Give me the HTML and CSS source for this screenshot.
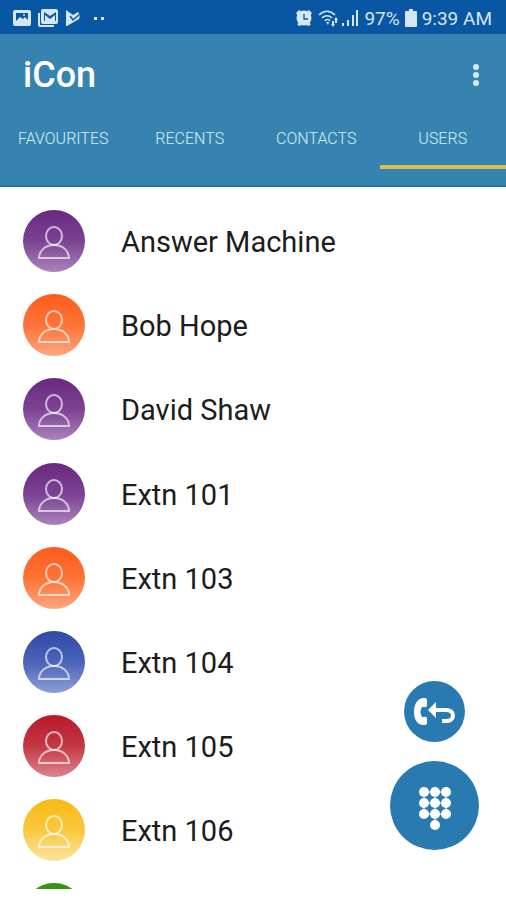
FILE: index.html
```html
<!DOCTYPE html>
<html lang="en">
<head>
  <meta charset="UTF-8">
  <meta name="viewport" content="width=device-width, initial-scale=1">
  <title>iCon - Users</title>
  <link rel="stylesheet" href="styles.css">
</head>
<body>
  <svg class="sprite" aria-hidden="true">
    <symbol id="person" viewBox="0 0 62 62">
      <ellipse cx="31" cy="26" rx="8" ry="9"/>
      <path d="M16 48c0-7 6-13 15-13s15 6 15 13z"/>
    </symbol>
  </svg>

  <div class="status-bar">
    <div class="status-left">
      <svg width="18" height="18" viewBox="0 0 18 18">
        <path fill-rule="evenodd" d="M2 1h14a2 2 0 0 1 2 2v12a2 2 0 0 1-2 2H2a2 2 0 0 1-2-2V3a2 2 0 0 1 2-2zM3 4v8l4-4 3 2 2-2 3 3V4z"/>
        <circle cx="11" cy="6" r="1"/>
      </svg>
      <svg width="20" height="18" viewBox="0 0 20 18">
        <path d="M0 4h2v12h14v2H2a2 2 0 0 1-2-2z"/>
        <path fill-rule="evenodd" d="M5 0h13a2 2 0 0 1 2 2v11a2 2 0 0 1-2 2H5a2 2 0 0 1-2-2V2a2 2 0 0 1 2-2zM6 3v9h1V6l5 4 5-4v6h1V3l-6 4z"/>
      </svg>
      <svg width="16" height="18" viewBox="0 0 16 18">
        <path d="M1 1l7 5 5-3 2 3-1 4L2 17H1z"/>
        <path d="M5 7l3 4 7-6" fill="none" stroke="#0956a2" stroke-width="1.5"/>
      </svg>
      <svg class="dots" width="12" height="18" viewBox="0 0 12 18">
        <path d="M0 8h3v3H0zM7 8h3v3H7z"/>
      </svg>
    </div>
    <div class="status-right">
      <svg width="18" height="18" viewBox="0 0 18 18">
        <circle cx="9" cy="9" r="7.5"/>
        <path d="M1 4l3-3 3 2-4 4zM17 4l-3-3-3 2 4 4zM2 15l3-2 2 3-3 1zM16 15l-3-2-2 3 3 1z"/>
        <path d="M9 5v5h4" fill="none" stroke="#0956a2" stroke-width="1.3"/>
      </svg>
      <svg class="wifi" width="22" height="18" viewBox="0 0 22 18">
        <g fill="none" stroke="#d5e6f7" stroke-width="1.6">
          <path d="M1 6c5-5 11-5 16 0M4 9c3-3 7-3 10 0M7 12c1-2 4-2 5 0"/>
        </g>
        <path d="M8 13h3l-1 3zM14 12h2v3h1l-2 3-2-3h1zM18 8l2 3h-1v3h-2v-3h-1z"/>
      </svg>
      <svg class="signal" width="18" height="18" viewBox="0 0 18 18">
        <path d="M1 14h2v3H1zM6 11h2v6H6zM11 6h2v11h-2zM15 1h2v16h-2z"/>
      </svg>
      <span>97%</span>
      <svg width="12" height="18" viewBox="0 0 12 18">
        <path d="M4 0h4v2h3a1 1 0 0 1 1 1v14a1 1 0 0 1-1 1H1a1 1 0 0 1-1-1V3a1 1 0 0 1 1-1h3z"/>
      </svg>
      <span>9:39 AM</span>
    </div>
  </div>

  <header class="app-bar">
    <div class="title-row">
      <h1>iCon</h1>
      <button class="menu-btn" aria-label="More options">
        <svg width="8" height="24" viewBox="0 0 8 24">
          <circle cx="4" cy="4" r="3"/><circle cx="4" cy="12" r="3"/><circle cx="4" cy="20" r="3"/>
        </svg>
      </button>
    </div>
    <nav class="tabs">
      <a href="#favourites">FAVOURITES</a>
      <a href="#recents">RECENTS</a>
      <a href="#contacts">CONTACTS</a>
      <a href="#users" class="active">USERS</a>
    </nav>
  </header>

  <ul class="user-list">
    <li><svg class="avatar purple"><use href="#person"/></svg><span>Answer Machine</span></li>
    <li><svg class="avatar orange"><use href="#person"/></svg><span>Bob Hope</span></li>
    <li><svg class="avatar purple"><use href="#person"/></svg><span>David Shaw</span></li>
    <li><svg class="avatar purple"><use href="#person"/></svg><span>Extn 101</span></li>
    <li><svg class="avatar orange"><use href="#person"/></svg><span>Extn 103</span></li>
    <li><svg class="avatar blue"><use href="#person"/></svg><span>Extn 104</span></li>
    <li><svg class="avatar red"><use href="#person"/></svg><span>Extn 105</span></li>
    <li><svg class="avatar yellow"><use href="#person"/></svg><span>Extn 106</span></li>
    <li><svg class="avatar green"><use href="#person"/></svg></li>
  </ul>

  <div class="fabs">
    <button class="fab" aria-label="Call back">
      <svg width="60" height="60" viewBox="0 0 60 60">
        <path d="M20 16c-7-1-11 6-11 14s4 14 11 13q2 0 2-2v-4q0-3-3-2l-2 0c-2-3-2-7 0-10l2 0q3 1 3-2v-5q0-2-2-2z"/>
        <path d="M23 28l8-8v16z"/>
        <path d="M29 28h12c4 0 7 2 7 5.500s-3 5.500-7 5.500h-4" fill="none" stroke="#fff" stroke-width="4"/>
      </svg>
    </button>
    <button class="fab fab-large" aria-label="Dial pad">
      <svg width="88" height="88" viewBox="0 0 88 88">
        <g stroke="#fff" stroke-width="1">
          <path d="M33 30h22M33 41h22M33 52h22M33 30v22M44 30v33M55 30v22"/>
        </g>
        <circle cx="33" cy="30" r="5"/><circle cx="44" cy="30" r="5"/><circle cx="55" cy="30" r="5"/>
        <circle cx="33" cy="41" r="5"/><circle cx="44" cy="41" r="5"/><circle cx="55" cy="41" r="5"/>
        <circle cx="33" cy="52" r="5"/><circle cx="44" cy="52" r="5"/><circle cx="55" cy="52" r="5"/>
        <circle cx="44" cy="63" r="5"/>
      </svg>
    </button>
  </div>
</body>
</html>
```
FILE: styles.css
```css
* { margin: 0; padding: 0; box-sizing: border-box; }
body {
  font-family: Roboto, sans-serif;
  background: #fff;
  color: #1c1c1c;
  height: 100vh;
  display: flex;
  flex-direction: column;
}
button { border: none; background: none; cursor: pointer; }
svg { display: block; }
.sprite { position: absolute; width: 0; height: 0; }

/* Status bar */
.status-bar {
  display: flex;
  justify-content: space-between;
  align-items: center;
  height: 34px;
  padding: 2px 14px 0 13px;
  background: #0956a2;
  color: #d5e6f7;
  font-size: 19px;
}
.status-bar svg { fill: #d5e6f7; }
.status-left { display: flex; gap: 7px; }
.status-left .dots { margin-left: 6px; }
.status-right { display: flex; align-items: center; gap: 5px; }
.status-right .wifi { margin-right: -4px; }

/* App bar and tabs */
.app-bar { background: #3783b0; border-bottom: 2px solid #2272a5; }
.title-row {
  display: flex;
  justify-content: space-between;
  align-items: center;
  height: 76px;
  padding: 6px 18px 0 23px;
}
.title-row h1 { font-size: 36px; font-weight: 500; color: #fff; }
.menu-btn { padding: 8px; }
.menu-btn svg { fill: #d3ecfa; }
.tabs { display: grid; grid-template-columns: repeat(4, 1fr); padding-bottom: 16px; }
.tabs a {
  height: 59px;
  border-bottom: 4px solid transparent;
  color: #d3f0fa;
  font-size: 16px;
  font-weight: 300;
  line-height: 58px;
  text-align: center;
  text-decoration: none;
}
.tabs a.active { border-color: #d9bf50; }

/* User list */
.user-list {
  flex: 1;
  min-height: 0;
  margin-bottom: 11px;
  padding-top: 12px;
  display: grid;
  grid-auto-rows: 12.2%;
  overflow-y: auto;
  scrollbar-width: none;
  list-style: none;
}
.user-list li {
  display: flex;
  align-items: center;
  gap: 36px;
  padding-left: 23px;
  font-size: 29px;
}
.user-list span { padding-top: 2px; }
.avatar {
  width: 62px;
  height: 62px;
  border-radius: 50%;
  fill: none;
  stroke: rgba(255, 255, 255, 0.65);
  stroke-width: 2;
}
.purple { background: linear-gradient(#6a2880, #7b4292 50%, #aa82bb); }
.orange { background: linear-gradient(#ff5c1c, #fd7336 50%, #ffa680); }
.blue { background: linear-gradient(#3049a8, #4a63b8 50%, #8d9ed6); }
.red { background: linear-gradient(#b81828, #c43744 50%, #dc858c); }
.yellow { background: linear-gradient(#f8b912, #fac83e 50%, #fde3a0); }
.green { background: linear-gradient(#339010, #55a838 50%, #9acb85); }

/* Floating buttons */
.fabs {
  position: fixed;
  right: 27px;
  bottom: 50px;
  display: flex;
  flex-direction: column;
  align-items: center;
  gap: 19px;
}
.fab {
  display: flex;
  align-items: center;
  justify-content: center;
  width: 61px;
  height: 61px;
  border-radius: 50%;
  background: #2a7ab2;
}
.fab svg { fill: #fff; flex: none; }
.fab-large { width: 89px; height: 89px; }
```
